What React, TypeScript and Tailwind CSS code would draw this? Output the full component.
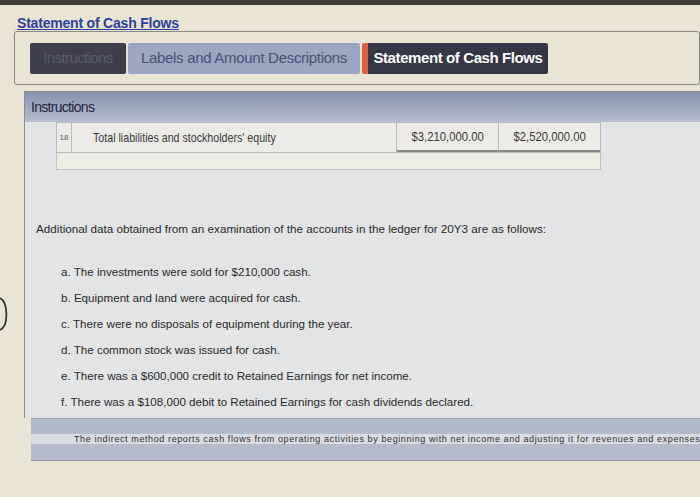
const items = [
  'a. The investments were sold for $210,000 cash.',
  'b. Equipment and land were acquired for cash.',
  'c. There were no disposals of equipment during the year.',
  'd. The common stock was issued for cash.',
  'e. There was a $600,000 credit to Retained Earnings for net income.',
  'f. There was a $108,000 debit to Retained Earnings for cash dividends declared.',
];

const sans = "font-['Liberation_Sans',Arial,sans-serif]";

export default function App() {
  return (
    <div className={`relative w-[700px] h-[497px] overflow-hidden bg-[#e9e4d4] ${sans}`}>
      <div className="h-[5px] bg-[#3c3b38]" />

      {/* page title */}
      <div className="pl-[17px] pt-[6px] h-[26px]">
        <span className="text-[14px] font-bold text-[#2c3f9e] underline tracking-[-0.2px]">
          Statement of Cash Flows
        </span>
      </div>

      {/* tabs */}
      <div className="ml-[14px] h-[54px] border border-[#8a8880] rounded-[3px] flex items-center pl-[15px] gap-[2px]">
        <div className="h-[31px] w-[96px] bg-[#3e3e4c] rounded-[2px] flex items-center justify-center text-[15px] text-[#5a5b6a] tracking-[-0.6px]">
          Instructions
        </div>
        <div className="h-[31px] w-[232px] bg-[#9ba7c3] rounded-[2px] flex items-center justify-center text-[15px] text-[#4a5270] tracking-[-0.3px]">
          Labels and Amount Descriptions
        </div>
        <div className="h-[31px] w-[186px] flex rounded-[2px] overflow-hidden">
          <div className="w-[6px] bg-[#e2603f]" />
          <div className="flex-1 bg-[#363746] flex items-center justify-center text-[15px] font-bold text-white tracking-[-0.4px]">
            Statement of Cash Flows
          </div>
        </div>
      </div>

      {/* content panel */}
      <div className="ml-[24px] mt-[6px] border-l border-t border-[#8c8c8c] bg-[#e3e4e5] h-[327px]">
        <div className="h-[30px] bg-gradient-to-b from-[#8892b1] to-[#b7bed0] flex items-center pl-[6px] text-[14px] text-[#23243a] tracking-[-0.7px]">
          Instructions
        </div>

        <div className="ml-[31px] w-[545px]">
          <div className="flex h-[31px] border border-[#b9b9b9] bg-[#ecebe8]">
            <div className="w-[15px] border-r border-[#b9b9b9] flex items-center justify-center text-[8px] text-[#555]">
              18
            </div>
            <div className="w-[325px] border-r border-[#b9b9b9] flex items-center pl-[21px] text-[13px] text-[#3a3a3a]">
              <span className="inline-block scale-x-[0.82] origin-left whitespace-nowrap">
                Total liabilities and stockholders' equity
              </span>
            </div>
            <div className="w-[102px] border-r border-[#b9b9b9] border-b-2 border-b-[#8a8a8a] flex items-center justify-center text-[13px] text-[#3a3a3a]">
              <span className="inline-block scale-x-[0.87] whitespace-nowrap">$3,210,000.00</span>
            </div>
            <div className="flex-1 border-b-2 border-b-[#8a8a8a] flex items-center justify-center text-[13px] text-[#3a3a3a]">
              <span className="inline-block scale-x-[0.87] whitespace-nowrap">$2,520,000.00</span>
            </div>
          </div>
          <div className="h-[17px] border border-t-0 border-[#c4c4c4] bg-[#efeee6]" />
        </div>

        <p className="mt-[50px] ml-[11px] text-[11.7px] text-[#2a2a2a]">
          Additional data obtained from an examination of the accounts in the ledger for 20Y3 are as follows:
        </p>

        <div className="mt-[25px] ml-[36px] flex flex-col gap-[11px]">
          {items.map((t) => (
            <div key={t} className="h-[15px] text-[11.6px] text-[#2a2a2a]">
              {t}
            </div>
          ))}
        </div>
      </div>

      {/* bottom bars */}
      <div className="ml-[31px] border-t border-[#9a9fab]">
        <div className="h-[15px] bg-[#b3bac9]" />
        <div className="h-[10px] bg-[#d9dce3] flex items-end pl-[43px] overflow-hidden">
          <span className="text-[9px] leading-[9px] text-[#333] whitespace-nowrap tracking-[0.6px]">
            The indirect method reports cash flows from operating activities by beginning with net income and adjusting it for revenues and expenses
          </span>
        </div>
        <div className="h-[17px] bg-[#b5bbca] border-b border-[#8f95a3]" />
      </div>

      {/* object at left edge */}
      <svg className="absolute left-0 top-[296px]" width="10" height="36" viewBox="0 0 10 36">
        <path d="M0 2 C8 6 9 30 0 34" fill="none" stroke="#333" strokeWidth="1.8" />
      </svg>
    </div>
  );
}
